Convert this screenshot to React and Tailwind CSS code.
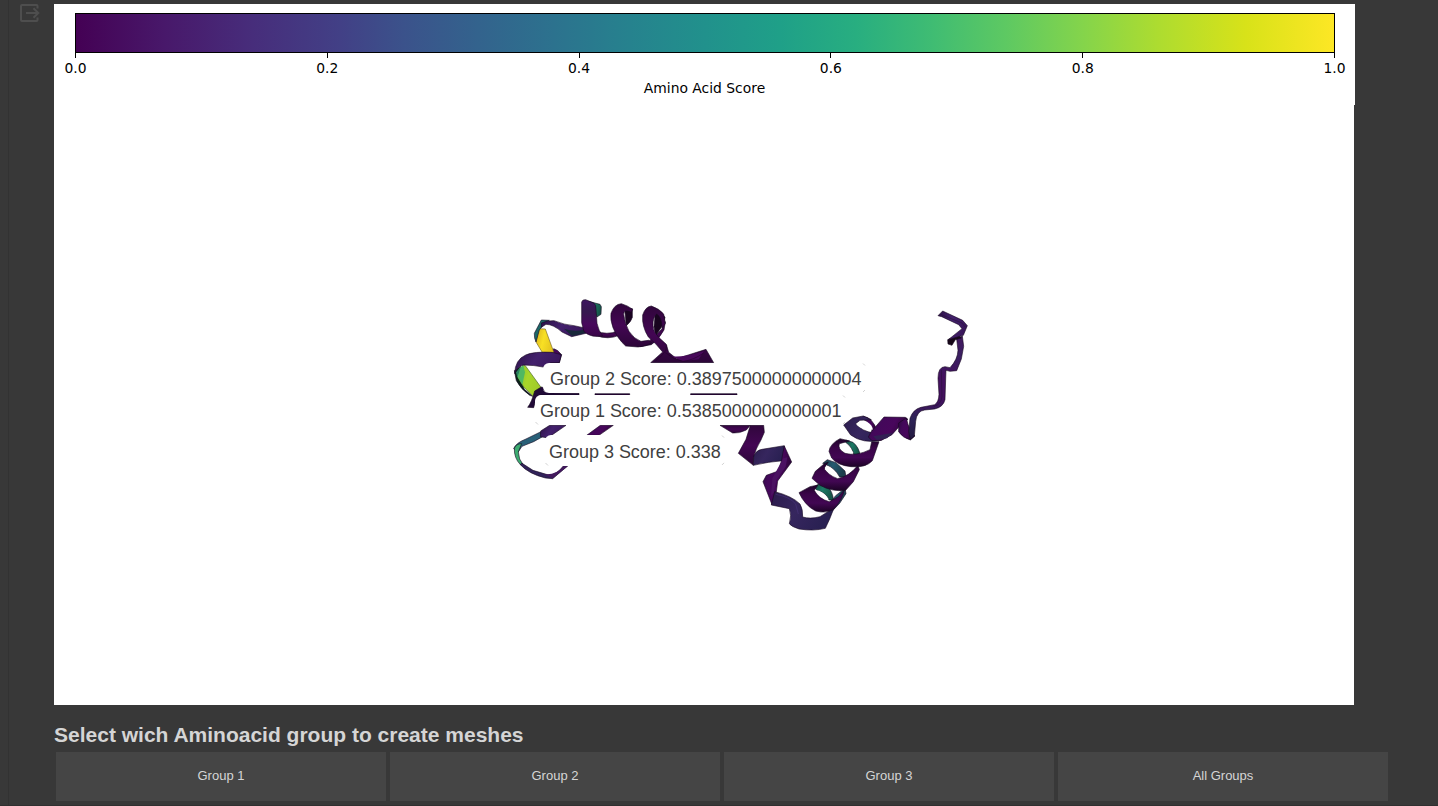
const ticks = ['0.0', '0.2', '0.4', '0.6', '0.8', '1.0'];
const groups = ['Group 1', 'Group 2', 'Group 3', 'All Groups'];

function OutputIcon() {
  return (
    <svg className="h-[20px] w-[22px]" viewBox="0 0 22 20" fill="none" stroke="#4e4e4e" strokeWidth="2">
      <path d="M17.5 5.5V3Q17.5 2 16.5 2H2Q1 2 1 3V17Q1 18 2 18H16.5Q17.5 18 17.5 17V14.5" />
      <path d="M6 10H18M13.5 5.2L18.3 10L13.5 14.8" />
    </svg>
  );
}

function ColorBar() {
  return (
    <div className="h-[101px] w-[1301px] bg-white pt-[9px] font-['DejaVu_Sans',sans-serif] text-[13.89px] leading-4 text-black">
      <div className="ml-[21px] h-10 w-[1260px] border border-black bg-[linear-gradient(to_right,#440154,#48186a_7%,#472d7b_14%,#424086_21%,#3b528b_26%,#33638d_32%,#2c728e_38%,#26828e_44%,#21918c_50%,#1fa088_56%,#28ae80_62%,#3fbc73_68%,#5ec962_74%,#84d44b_80%,#addc30_86%,#d8e219_93%,#fde725)]" />
      <div className="flex w-[1301px] justify-between pl-[1px]">
        {ticks.map((t) => (
          <div key={t} className="flex w-[41px] flex-col items-center">
            <div className="h-[5px] w-px bg-black" />
            <div className="mt-[2px]">{t}</div>
          </div>
        ))}
      </div>
      <div className="mt-[4px] text-center">Amino Acid Score</div>
    </div>
  );
}

function Gradient({ id, stops, down }) {
  return (
    <linearGradient id={id} x1="0" y1="0" x2={down ? '0' : '1'} y2={down ? '1' : '0.35'}>
      {stops.map((c, i) => (
        <stop key={i} offset={i / (stops.length - 1)} stopColor={c} />
      ))}
    </linearGradient>
  );
}

function Protein() {
  return (
    <svg className="block h-[600px] w-[1300px]" viewBox="54 105 1300 600" strokeLinejoin="round">
      <defs>
        <Gradient id="purple" stops={['#2b0c40', '#43085a', '#48065c', '#2a0636']} />
        <Gradient id="violet" stops={['#2c1146', '#43216d', '#3a175c']} />
        <Gradient id="dark" down stops={['#30063c', '#430653', '#2c0638']} />
        <Gradient id="coil" down stops={['#1e0428', '#3a0548', '#420753', '#1c0325']} />
        <Gradient id="first" down stops={['#3d1660', '#36194f', '#48085c', '#3a0549']} />
        <Gradient id="blue" stops={['#2b1c4c', '#36265e', '#292052']} />
        <Gradient id="rise" down stops={['#42185f', '#3b2062', '#44105f', '#44105f', '#2e2358', '#231a3f']} />
        <Gradient id="yellow" stops={['#d8b01f', '#f8e024', '#e6c71f']} />
        <Gradient id="lime" stops={['#84bd31', '#a9d629', '#a0cc2a']} />
        <Gradient id="teal" stops={['#15483f', '#1d7a65', '#175649']} />
        <Gradient id="sea" stops={['#1b3a48', '#255a70', '#1c3e4c']} />
      </defs>

      {/* the model's own drawing units are a third of a pixel */}
      <g transform="translate(500 290) scale(.33333)" stroke="#150620" strokeWidth="1.8">
        {/* upper left coils */}
        <path fill="url(#purple)" d="M155 185L161 176Q172 178 185 194L178 218H150Z" />
        <path fill="url(#yellow)" stroke="#6d5a1c" d="M116 116L136 117L162 188L128 189L108 156Z" />
        <path fill="#1d6767" d="M103 130L124 90L148 91L134 100L118 120L108 156Q102 144 103 130Z" />
        <path fill="url(#violet)" d="M124 99Q140 91 162 92Q195 105 222 107L250 113L258 130L215 140L186 126Q160 103 138 103L124 112Z" />
        <path fill="#18283a" stroke="none" d="M192 116Q222 126 252 119L257 129L216 138Z" />
        <path fill="url(#teal)" d="M262 33L300 43L304 50L303 73L291 81L280 58Z" />
        <path fill="url(#dark)" d="M288 122Q320 137 353 123L358 136Q324 150 289 137Z" />
        <path fill="url(#first)" d="M245 36Q247 28 257 29L281 39Q289 43 288 58L291 100Q297 127 308 137Q275 145 252 125L245 98Z" />
        <path fill="#1a0422" d="M374 58L397 56L397 82Q393 96 379 107Z" />
        <path fill="url(#dark)" d="M423 165Q445 158 462 140L485 118L496 95L492 120Q475 151 454 164L420 170Z" />
        <path fill="url(#dark)" d="M333 70Q342 43 364 41Q384 47 398 58L394 67Q371 56 371 73Q376 104 387 124Q402 147 423 154L446 151L455 159Q436 170 414 171L377 168Q353 147 339 113Q330 88 333 70Z" />
        <path fill="#18041f" d="M466 68Q487 67 495 82L490 103L467 137L462 110Z" />
        <path fill="url(#dark)" d="M428 75Q436 50 454 48Q478 56 491 72L496 101L486 114Q486 82 470 72Q458 83 459 107Q460 125 476 142L499 163L506 187L530 206L618 178L641 218H452L488 186Q468 160 445 141Q425 109 428 75Z" />
        <path fill="#48085a" stroke="none" d="M512 198Q540 205 612 184L596 208L548 214Z" />
        <path fill="none" stroke="#210329" d="M496 188Q520 209 549 214Q580 211 611 189M500 165Q501 184 485 197L466 214" />
        <path fill="#0b2419" d="M43 242L62 229L60 268L73 298L98 319L89 316Q62 297 49 272Z" />
        <path fill="url(#lime)" stroke="#3d5a20" d="M68 226L76 227L123 292L100 319L71 291L54 263Z" />
        <path fill="#50b862" stroke="none" d="M58 234L70 226L75 247L67 284L52 260Z" />
        <path fill="#2a8161" stroke="none" d="M48 247L63 229L58 244L52 262Z" />
        <path fill="url(#violet)" d="M44 251Q45 209 77 195Q102 184 157 187L184 194L178 218H152L135 232Q101 225 70 225Q52 229 44 251Z" />

        {/* lower left loop and segments between the captions */}
        <path fill="#210a37" d="M104 303L124 291L141 296L150 309L237 310V315H119L108 326L101 353L83 352Q95 337 104 303Z" />
        <path fill="#2a053a" d="M285 311H389V315H285ZM572 311H711V315H572Z" />
        <path fill="#296078" d="M121 426L128 440L101 455L66 469L54 487L41 476Q47 459 78 447Z" />
        <path fill="#3cab70" d="M43 475Q48 461 65 461L55 486L59 507L72 528L61 524Q42 504 43 475Z" />
        <path fill="#302259" d="M65 519L99 541L149 556Q171 553 190 528H203L158 566L136 564Q85 551 61 524Z" />
        <path fill="#43195d" stroke="none" d="M130 552Q166 558 190 529H203L158 565Z" />
        <path fill="url(#violet)" d="M122 423L149 406H198L153 437L139 443L121 440Z" />
        <path fill="url(#purple)" d="M260 436L301 406H340L297 436Z" />

        {/* middle ribbon */}
        <path fill="url(#dark)" d="M660 406H751L739 420Q718 431 698 429Z" />
        <path fill="url(#dark)" d="M751 406H791L793 427L783 450Q766 477 761 504L760 526L715 490L738 448Z" />
        <path fill="url(#blue)" d="M761 500Q767 481 786 478L853 467L850 512Q806 515 760 526Z" />
        <path fill="url(#purple)" d="M853 468L875 516L833 573L829 605L816 644L789 575L799 556L835 543Q847 509 849 487Z" />
        <path fill="#4b1262" stroke="none" d="M850 505L862 502L857 530L829 570L821 609L813 618L817 565Z" />

        {/* lower right helix */}
        <path fill="url(#sea)" d="M1007 617L1035 595L1038 611L1019 640L995 665L982 647Z" />
        <path fill="url(#blue)" d="M824 605Q876 618 900 642Q909 657 908 681Q930 688 960 680L992 660L1000 659Q990 687 976 715Q942 724 897 717Q874 710 868 701Q876 676 868 656L814 645Z" />
        <path fill="none" stroke="#4a347c" d="M827 613Q869 620 887 642L895 672" />
        <path fill="url(#teal)" d="M942 591L960 580L981 588Q999 605 1000 630H987Q978 607 953 603Z" />
        <path fill="url(#coil)" d="M897 608L930 590L954 585L943 601Q956 627 988 635L1015 620L1033 599Q1029 626 1002 657Q979 672 947 663Q915 647 897 608Z" />
        <path fill="#fff" stroke="none" d="M945 600Q971 602 986 628Q962 628 945 600Z" />
        <path fill="url(#sea)" d="M968 520L982 509L1008 518L1035 543L1038 561L1019 561Q1003 532 979 525Z" />
        <path fill="url(#coil)" d="M936 565L946 544L973 521L985 516L974 533Q980 554 1013 566Q1046 560 1074 526L1078 539L1060 575L1037 601Q996 606 960 586Z" />
        <path fill="#fff" stroke="none" d="M979 526Q1003 537 1013 560Q988 553 974 538Z" />
        <path fill="url(#teal)" d="M1037 450L1059 457Q1078 473 1080 496L1063 500Q1059 472 1037 457Z" />
        <path fill="url(#coil)" d="M987 484Q990 461 1020 446L1049 453L1018 461Q1012 477 1035 490Q1069 499 1110 479L1115 455H1137L1117 512Q1098 534 1053 530Q1012 526 995 504Z" />
        <path fill="#fff" stroke="none" d="M1033 469Q1053 475 1060 489Q1044 491 1028 480Z" />
        <path fill="url(#purple)" d="M1089 379Q1118 382 1131 422L1119 434Q1113 400 1089 387Z" />
        <path fill="url(#blue)" d="M1031 405L1058 384L1090 378L1114 389L1080 391L1067 401Q1085 424 1122 429L1175 433L1143 451Q1089 462 1052 435Z" />
        <path fill="#fff" stroke="none" d="M1069 404Q1081 389 1101 395Q1117 404 1119 419Q1089 421 1069 404Z" />

        {/* chain rising to the right */}
        <path fill="url(#purple)" d="M1113 426L1152 381L1216 382L1224 388L1201 406L1176 434L1144 451L1116 452L1105 441Z" />
        <path fill="#322054" stroke="none" d="M1119 439L1180 428L1161 445L1131 450Z" />
        <path fill="url(#purple)" d="M1196 399L1219 384Q1228 425 1245 438L1231 450Q1208 443 1196 426Z" />
        <path fill="url(#rise)" d="M1226 425L1230 385Q1239 358 1263 352L1304 344Q1316 337 1317 313L1314 265Q1314 231 1335 230L1350 233Q1373 209 1374 181L1370 147L1387 138L1391 169L1384 207L1370 242L1350 244L1338 241L1337 267L1335 329Q1330 351 1304 357L1274 360Q1250 363 1247 394L1243 438L1231 449Z" />
        <path fill="#160717" d="M1343 149L1375 134L1384 144L1366 149L1356 166L1344 162Z" />
        <path fill="url(#violet)" d="M1314 77L1328 63L1388 91L1402 107L1390 136L1345 149L1386 116L1376 104L1325 80Z" />
        <path fill="none" stroke="#28103b" d="M1321 73L1386 99L1396 112M1324 240L1326 320Q1323 344 1302 349" />
      </g>
    </svg>
  );
}

function ScoreLabel({ place, children }) {
  return (
    <div className={`absolute rounded-[6px] bg-white font-['Liberation_Sans',Arial,sans-serif] text-[18px] tracking-[-0.02px] whitespace-nowrap text-[#404040] ${place}`}>
      {children}
      <svg className="absolute top-0 right-0 h-full w-1" viewBox="0 0 4 30" preserveAspectRatio="none" fill="none" stroke="#c6c6c6" strokeWidth=".8">
        <path d="M1 0.5L3 2.5M3 27L1 29" />
      </svg>
      <svg className="absolute bottom-0 left-0 h-1 w-1" viewBox="0 0 4 4" fill="none" stroke="#c6c6c6" strokeWidth=".8">
        <path d="M.5 1L3 3.5" />
      </svg>
    </div>
  );
}

export default function App() {
  return (
    <div className="flex h-[806px] w-[1438px] overflow-hidden border-b border-[#303030] bg-[#383838] font-['Liberation_Sans',Arial,sans-serif]">
      <aside className="flex w-[54px] shrink-0">
        <div className="w-[9px] shrink-0 border-r border-[#323232]" />
        <div className="pt-[3px] pl-[11px]"><OutputIcon /></div>
      </aside>
      <main className="pt-1">
        <ColorBar />
        <section className="relative h-[600px] w-[1300px] bg-white">
          <Protein />
          <ScoreLabel place="left-[489px] top-[258px] h-[30px] w-[323px] pl-[7px] leading-[33px]">Group 2 Score: 0.38975000000000004</ScoreLabel>
          <ScoreLabel place="left-[481px] top-[290px] h-[30px] w-[311px] pl-[5px] leading-[33px]">Group 1 Score: 0.5385000000000001</ScoreLabel>
          <ScoreLabel place="left-[491px] top-[330px] h-[31px] w-[180px] pl-[4px] leading-[34px]">Group 3 Score: 0.338</ScoreLabel>
        </section>
        <h2 className="mt-[17px] h-[26px] text-[21px] leading-[26px] font-bold text-[#d5d5d5]">Select wich Aminoacid group to create meshes</h2>
        <div className="mt-1 ml-[2px] flex gap-1">
          {groups.map((g) => (
            <button key={g} className="h-[49px] w-[330px] bg-[#454545] pb-[2px] text-[13px] text-[#d5d5d5]">{g}</button>
          ))}
        </div>
      </main>
    </div>
  );
}
